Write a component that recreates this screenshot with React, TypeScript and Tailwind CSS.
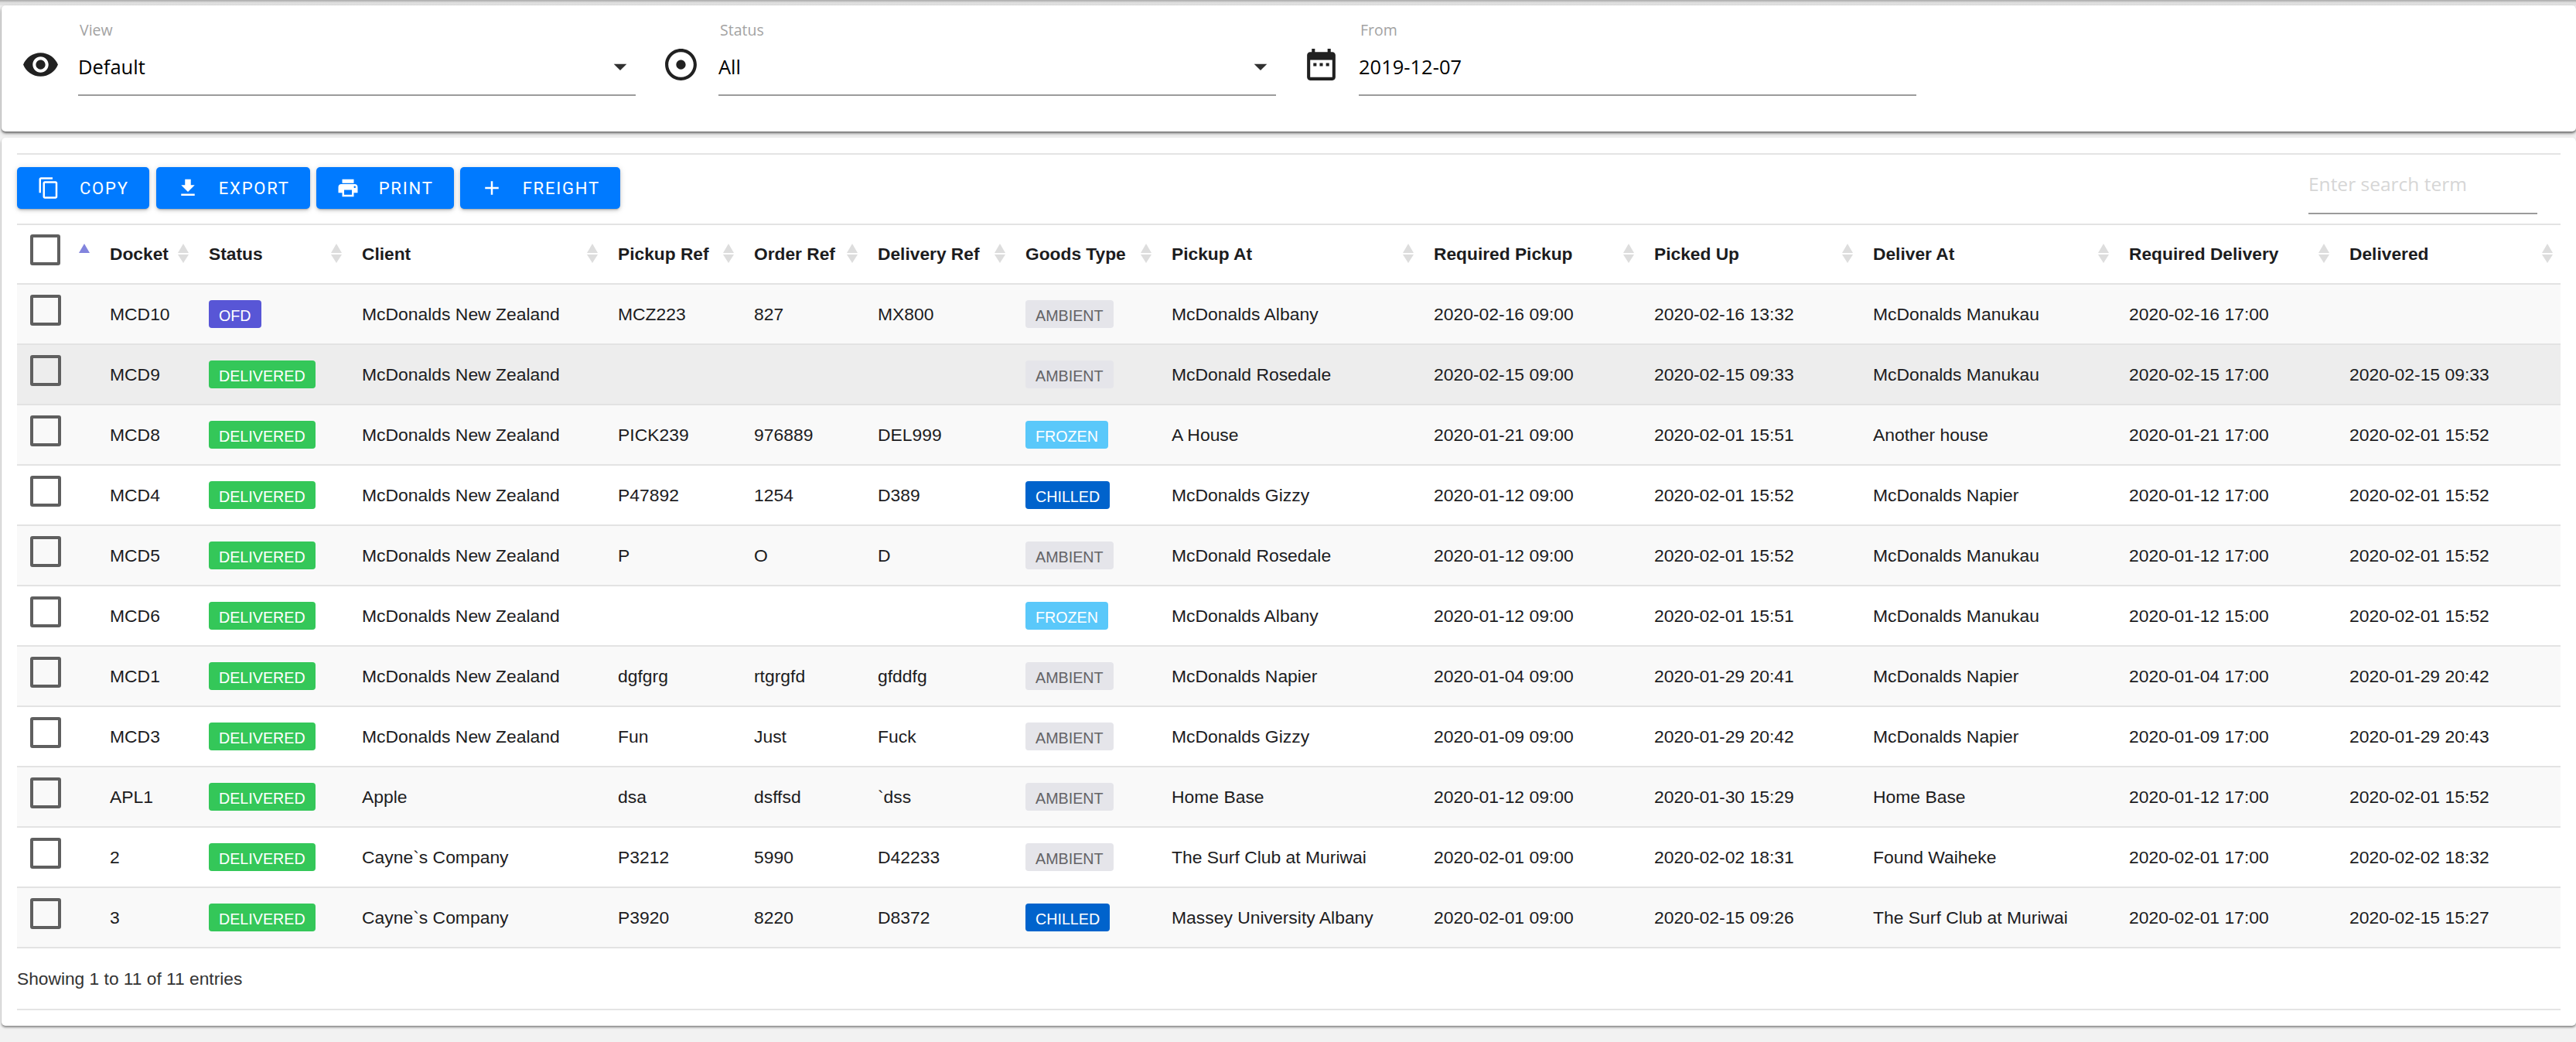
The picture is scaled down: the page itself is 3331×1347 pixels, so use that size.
import React from 'react';

const columns = [
  { title: '', width: 'w-[104px]' },
  { title: 'Docket', width: 'w-[128px]' },
  { title: 'Status', width: 'w-[198px]' },
  { title: 'Client', width: 'w-[331px]' },
  { title: 'Pickup Ref', width: 'w-[176px]' },
  { title: 'Order Ref', width: 'w-[160px]' },
  { title: 'Delivery Ref', width: 'w-[191px]' },
  { title: 'Goods Type', width: 'w-[189px]' },
  { title: 'Pickup At', width: 'w-[339px]' },
  { title: 'Required Pickup', width: 'w-[285px]' },
  { title: 'Picked Up', width: 'w-[283px]' },
  { title: 'Deliver At', width: 'w-[331px]' },
  { title: 'Required Delivery', width: 'w-[285px]' },
  { title: 'Delivered', width: 'w-[289px]' }
];

const rows = [
  ['MCD10', 'OFD', 'McDonalds New Zealand', 'MCZ223', '827', 'MX800', 'AMBIENT', 'McDonalds Albany', '2020-02-16 09:00', '2020-02-16 13:32', 'McDonalds Manukau', '2020-02-16 17:00', ''],
  ['MCD9', 'DELIVERED', 'McDonalds New Zealand', '', '', '', 'AMBIENT', 'McDonald Rosedale', '2020-02-15 09:00', '2020-02-15 09:33', 'McDonalds Manukau', '2020-02-15 17:00', '2020-02-15 09:33'],
  ['MCD8', 'DELIVERED', 'McDonalds New Zealand', 'PICK239', '976889', 'DEL999', 'FROZEN', 'A House', '2020-01-21 09:00', '2020-02-01 15:51', 'Another house', '2020-01-21 17:00', '2020-02-01 15:52'],
  ['MCD4', 'DELIVERED', 'McDonalds New Zealand', 'P47892', '1254', 'D389', 'CHILLED', 'McDonalds Gizzy', '2020-01-12 09:00', '2020-02-01 15:52', 'McDonalds Napier', '2020-01-12 17:00', '2020-02-01 15:52'],
  ['MCD5', 'DELIVERED', 'McDonalds New Zealand', 'P', 'O', 'D', 'AMBIENT', 'McDonald Rosedale', '2020-01-12 09:00', '2020-02-01 15:52', 'McDonalds Manukau', '2020-01-12 17:00', '2020-02-01 15:52'],
  ['MCD6', 'DELIVERED', 'McDonalds New Zealand', '', '', '', 'FROZEN', 'McDonalds Albany', '2020-01-12 09:00', '2020-02-01 15:51', 'McDonalds Manukau', '2020-01-12 15:00', '2020-02-01 15:52'],
  ['MCD1', 'DELIVERED', 'McDonalds New Zealand', 'dgfgrg', 'rtgrgfd', 'gfddfg', 'AMBIENT', 'McDonalds Napier', '2020-01-04 09:00', '2020-01-29 20:41', 'McDonalds Napier', '2020-01-04 17:00', '2020-01-29 20:42'],
  ['MCD3', 'DELIVERED', 'McDonalds New Zealand', 'Fun', 'Just', 'Fuck', 'AMBIENT', 'McDonalds Gizzy', '2020-01-09 09:00', '2020-01-29 20:42', 'McDonalds Napier', '2020-01-09 17:00', '2020-01-29 20:43'],
  ['APL1', 'DELIVERED', 'Apple', 'dsa', 'dsffsd', '`dss', 'AMBIENT', 'Home Base', '2020-01-12 09:00', '2020-01-30 15:29', 'Home Base', '2020-01-12 17:00', '2020-02-01 15:52'],
  ['2', 'DELIVERED', 'Cayne`s Company', 'P3212', '5990', 'D42233', 'AMBIENT', 'The Surf Club at Muriwai', '2020-02-01 09:00', '2020-02-02 18:31', 'Found Waiheke', '2020-02-01 17:00', '2020-02-02 18:32'],
  ['3', 'DELIVERED', 'Cayne`s Company', 'P3920', '8220', 'D8372', 'CHILLED', 'Massey University Albany', '2020-02-01 09:00', '2020-02-15 09:26', 'The Surf Club at Muriwai', '2020-02-01 17:00', '2020-02-15 15:27']
];

const badgeColors: Record<string, string> = {
  OFD: 'bg-[#5856d6] text-white',
  DELIVERED: 'bg-[#34c759] text-white',
  AMBIENT: 'bg-[#e5e5ea] text-[#636366]',
  FROZEN: 'bg-[#5ac8fa] text-white',
  CHILLED: 'bg-[#0063cc] text-white'
};

const icons = {
  eye: 'M12 4.5C7 4.5 2.73 7.61 1 12c1.73 4.39 6 7.5 11 7.5s9.27-3.11 11-7.5c-1.73-4.39-6-7.5-11-7.5zM12 17c-2.76 0-5-2.24-5-5s2.24-5 5-5 5 2.24 5 5-2.24 5-5 5zm0-8c-1.66 0-3 1.34-3 3s1.34 3 3 3 3-1.34 3-3-1.34-3-3-3z',
  adjust: 'M12 2C6.49 2 2 6.49 2 12s4.49 10 10 10 10-4.49 10-10S17.51 2 12 2zm0 18c-4.41 0-8-3.59-8-8s3.59-8 8-8 8 3.59 8 8-3.59 8-8 8zm3-8c0 1.66-1.34 3-3 3s-3-1.34-3-3 1.34-3 3-3 3 1.34 3 3z',
  calendar: 'M9 11H7v2h2v-2zm4 0h-2v2h2v-2zm4 0h-2v2h2v-2zm2-7h-1V2h-2v2H8V2H6v2H5c-1.11 0-1.99.9-1.99 2L3 20c0 1.1.89 2 2 2h14c1.1 0 2-.9 2-2V6c0-1.1-.9-2-2-2zm0 16H5V9h14v11z',
  copy: 'M16 1H4c-1.1 0-2 .9-2 2v14h2V3h12V1zm3 4H8c-1.1 0-2 .9-2 2v14c0 1.1.9 2 2 2h11c1.1 0 2-.9 2-2V7c0-1.1-.9-2-2-2zm0 16H8V7h11v14z',
  download: 'M19 9h-4V3H9v6H5l7 7 7-7zM5 18v2h14v-2H5z',
  print: 'M19 8H5c-1.66 0-3 1.34-3 3v6h4v4h12v-4h4v-6c0-1.66-1.34-3-3-3zm-3 11H8v-5h8v5zm3-7c-.55 0-1-.45-1-1s.45-1 1-1 1 .45 1 1-.45 1-1 1zm-1-9H6v4h12V3z',
  add: 'M19 13h-6v6h-2v-6H5v-2h6V5h2v6h6v2z'
};

function MaterialIcon({ path, className }: { path: string; className: string }) {
  return (
    <svg viewBox="0 0 24 24" fill="currentColor" className={className}>
      <path d={path} />
    </svg>
  );
}

function Filter({ icon, label, value, select }: { icon: string; label: string; value: string; select?: boolean }) {
  return (
    <div className="flex items-start gap-[24px]">
      <MaterialIcon path={icon} className="w-[49px] h-[49px] mt-[30px] text-[#212121] shrink-0" />
      <div className="w-[721px] font-['Open_Sans',sans-serif]">
        <div className="h-[20px] pl-[2px] text-[19.5px] leading-[20px] text-[#a3a3a3]">{label}</div>
        <div className="mt-[17px] h-[58px] pb-[16px] border-b-2 border-[#9b9b9b] flex items-center justify-between text-[25.5px] text-black">
          <span>{value}</span>
          {select && (
            <svg viewBox="0 0 24 24" fill="currentColor" className="w-[40px] h-[40px] text-[#303030]">
              <path d="M7 10l5 5 5-5z" />
            </svg>
          )}
        </div>
      </div>
    </div>
  );
}

function ActionButton({ icon, label, className = '' }: { icon: string; label: string; className?: string }) {
  return (
    <button className={`h-[54px] pl-[26px] pr-[26px] flex items-center gap-[25px] rounded-[5px] bg-[#007aff] text-white text-[22px] tracking-[1.8px] font-['Roboto',sans-serif] font-normal shadow-[0_3px_2px_-2px_rgba(0,0,0,0.2),0_2px_4px_0_rgba(0,0,0,0.14),0_1px_8px_0_rgba(0,0,0,0.12)] ${className}`}>
      <MaterialIcon path={icon} className="w-[30px] h-[30px]" />
      {label}
    </button>
  );
}

function SortArrows({ active }: { active?: boolean }) {
  return (
    <svg viewBox="0 0 14 25" className="absolute right-[10px] top-[24px] w-[14px] h-[25px]">
      <polygon points="7,0 14,12 0,12" fill={active ? '#8284dd' : '#dddddd'} />
      {!active && <polygon points="0,14 14,14 7,25" fill="#dddddd" />}
    </svg>
  );
}

function Checkbox({ header }: { header?: boolean }) {
  return (
    <div className={`ml-[17px] h-[40px] rounded-[3px] border-[4px] border-[#5f5f5f] ${header ? 'w-[39px] mb-[11px]' : 'w-[40px] mb-[10px]'}`}></div>
  );
}

export default function App() {
  return (
    <div className="min-h-screen bg-[#f2f2f2] overflow-hidden font-['Liberation_Sans',Arial,sans-serif] text-[22.75px] text-[#1c1c1e]">
      <div className="h-[7px] bg-gradient-to-b from-[#a8a8a8] via-[#dedede] to-[#e4e4e4]"></div>

      {/* Filters */}
      <div className="ml-[2px] h-[163px] pl-[26px] pt-[22px] flex gap-[34px] items-start bg-white rounded-[5px] shadow-[0_2px_3px_0_rgba(0,0,0,0.5),0_3px_6px_0_rgba(0,0,0,0.15)]">
        <Filter icon={icons.eye} label="View" value="Default" select />
        <Filter icon={icons.adjust} label="Status" value="All" select />
        <Filter icon={icons.calendar} label="From" value="2019-12-07" />
      </div>

      {/* Freight table */}
      <div className="ml-[2px] mt-[8px] px-[20px] pt-[20px] pb-[20px] bg-white rounded-[5px] shadow-[0_2px_3px_0_rgba(0,0,0,0.45)]">
        <div className="h-[2px] bg-[#e4e4e4]"></div>
        <div className="h-[89px] pt-[16px] flex items-start justify-between">
          <div className="flex gap-[8px]">
            <ActionButton icon={icons.copy} label="COPY" className="mr-[1px]" />
            <ActionButton icon={icons.download} label="EXPORT" />
            <ActionButton icon={icons.print} label="PRINT" />
            <ActionButton icon={icons.add} label="FREIGHT" />
          </div>
          <input
            placeholder="Enter search term"
            className="mr-[30px] w-[296px] h-[61px] pb-[17px] border-b-2 border-[#9b9b9b] outline-none bg-transparent text-[24.5px] font-['Open_Sans',sans-serif] placeholder:text-[#d6d6d6]"
          />
        </div>

        <table className="w-[3289px] table-fixed border-separate border-spacing-0">
          <colgroup>
            {columns.map((column, index) => (
              <col key={index} className={column.width} />
            ))}
          </colgroup>
          <thead>
            <tr>
              {columns.map((column, index) => (
                <th key={index} className="relative h-[79px] p-0 pl-[16px] text-left font-bold border-t-2 border-b-2 border-[#e3e3e3]">
                  {index === 0 ? (
                    <div className="-ml-[16px]">
                      <Checkbox header />
                    </div>
                  ) : (
                    column.title
                  )}
                  <SortArrows active={index === 0} />
                </th>
              ))}
            </tr>
          </thead>
          <tbody>
            {rows.map((row, rowIndex) => (
              <tr key={rowIndex} className={rowIndex === 1 ? 'bg-[#ededed]' : rowIndex % 2 === 0 ? 'bg-[#f9f9f9]' : 'bg-white'}>
                <td className="h-[78px] p-0 border-b-2 border-[#e3e3e3]">
                  <Checkbox />
                </td>
                {row.map((cell, cellIndex) => (
                  <td key={cellIndex} className="h-[78px] p-0 pl-[16px] text-[22.9px] border-b-2 border-[#e3e3e3] whitespace-nowrap">
                    {badgeColors[cell] ? (
                      <span className={`inline-block h-[36px] px-[13px] pt-[3px] rounded-[4px] text-[19.7px] leading-[35px] align-middle ${badgeColors[cell]}`}>
                        {cell}
                      </span>
                    ) : (
                      cell
                    )}
                  </td>
                ))}
              </tr>
            ))}
          </tbody>
        </table>

        <div className="h-[78px] flex items-center text-[#333333]">Showing 1 to 11 of 11 entries</div>
        <div className="h-[2px] bg-[#e4e4e4]"></div>
      </div>
    </div>
  );
}
